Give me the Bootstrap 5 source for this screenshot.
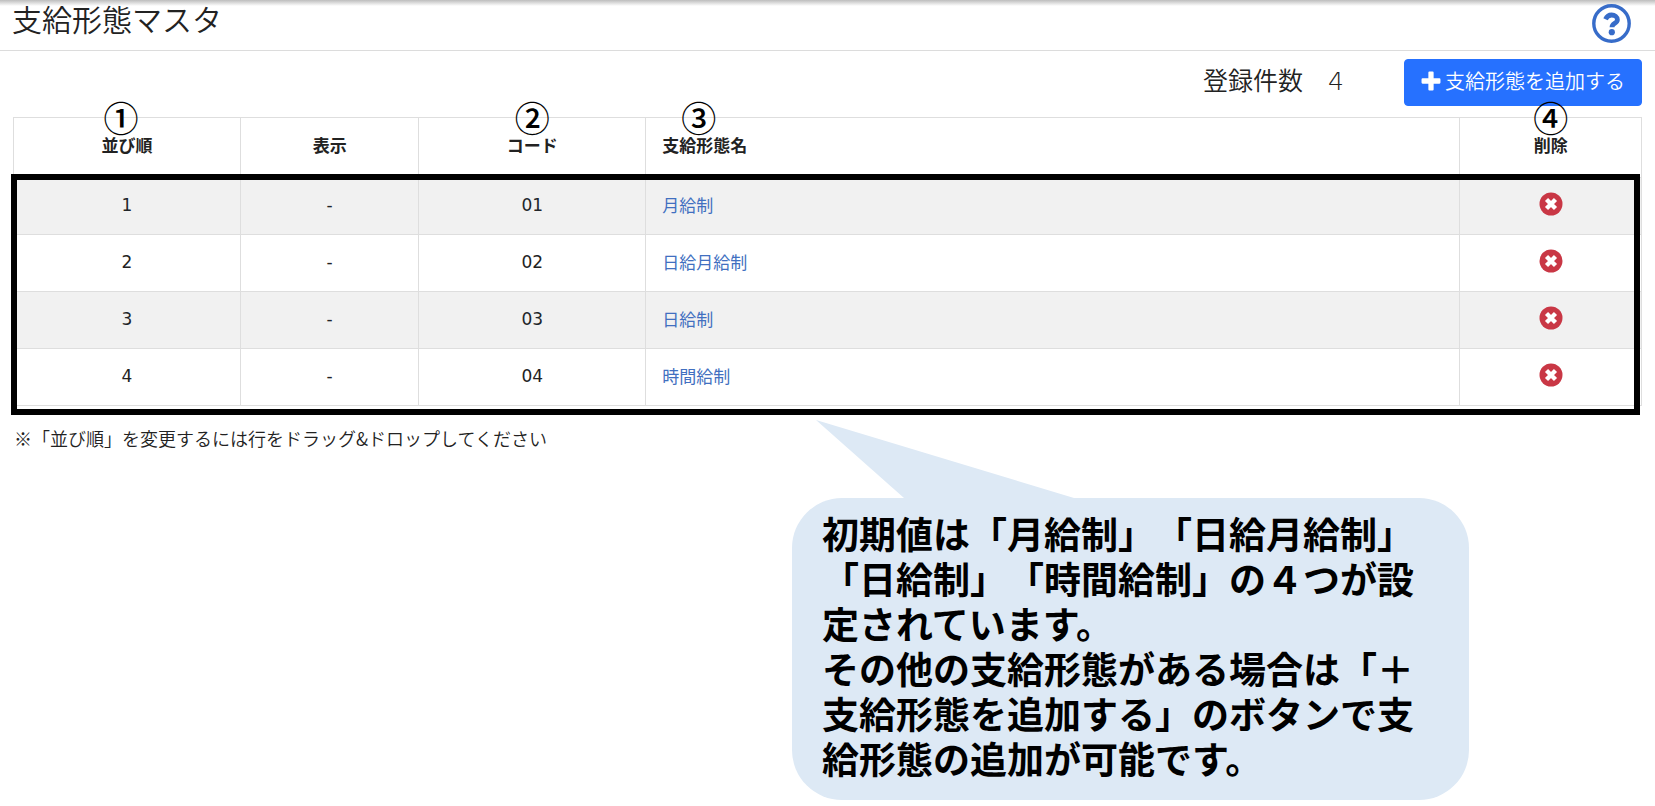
<!DOCTYPE html>
<html lang="ja">
<head>
<meta charset="utf-8">
<meta name="viewport" content="width=device-width, initial-scale=1">
<title>支給形態マスタ</title>
<link href="https://cdn.jsdelivr.net/npm/bootstrap@5.3.0/dist/css/bootstrap.min.css" rel="stylesheet">
<style>
  body { font-family: "Noto Sans CJK JP", sans-serif; color: #222; background: #fff; text-spacing-trim: space-all; }
  .page-head { height: 51px; border-bottom: 1px solid #dcdcdc; background: linear-gradient(#bdbdbd, #fff 6px); padding: 0 24px 0 12px; }
  .page-head h1 { font-size: 30px; line-height: 36px; font-weight: 350; }
  .help-link { color: #376cc9; line-height: 0; margin-top: 4px; }
  .toolbar { padding: 8px 13px 0; margin-bottom: 11px; }
  .count { font-size: 25px; line-height: 40px; font-weight: 350; margin-right: 60px; }
  .num { font-family: "DejaVu Sans", sans-serif; }
  .btn-add { --bs-btn-bg: #2671ff; --bs-btn-border-color: #2671ff; --bs-btn-color: #fff; --bs-btn-border-radius: 4px; --bs-btn-padding-x: 16px; --bs-btn-padding-y: 0px; --bs-btn-font-size: 20px; height: 47px; font-weight: 350; }
  .list-area { margin: 0 13px; }
  .pay-table { table-layout: fixed; font-size: 17px; line-height: 26px; --bs-table-striped-bg: #f1f1f1; color: #222; border-color: #dedede; }
  .pay-table th { height: 60px; padding: 0 16px 6px; vertical-align: middle; }
  .pay-table td { height: 57px; padding: 0 16px 3px; }
  .pay-table a { color: #416fc0; }
  .pay-table .btn { line-height: 0; color: #c93745; vertical-align: top; }
  .marker { position: absolute; top: -30px; left: 50%; transform: translateX(-50%); font-size: 35px; line-height: 30px; font-weight: 500; color: #000; }
  .marker-start { margin-left: -6px; }
  .frame { position: absolute; top: 57px; right: 2px; bottom: -9px; left: -2px; border: 6px solid #000; pointer-events: none; }
  .hint { font-size: 18px; line-height: 26px; margin: 19px 14px 0; font-weight: 350; }
  .callout { position: relative; margin: 47px 0 7px 47.85%; width: 40.9%; min-width: 652px; padding: 13px 30px 19px; border-radius: 50px; background: #dde9f5; color: #000; font-size: 37px; line-height: 45px; font-weight: 700; }
  .callout p { white-space: nowrap; }
  .tail { position: absolute; left: 24px; bottom: 100%; display: block; }
</style>
</head>
<body>
<header class="page-head d-flex justify-content-between align-items-start">
  <h1 class="m-0">支給形態マスタ</h1>
  <a class="help-link" href="#" aria-label="ヘルプ">
    <svg width="39" height="39" viewBox="0 0 39 39" fill="none" stroke="currentColor">
      <circle cx="19.5" cy="19.5" r="17.7" stroke-width="3.4"/>
      <path d="M13.500 15.200C14.800 12.400 16.800 11 19.600 11C22.800 11 25.400 12.900 25.400 15.700C25.400 19.300 20 19.300 20 23.200" stroke-width="4.800"/>
      <circle cx="19.8" cy="28.2" r="3.1" fill="currentColor" stroke="none"/>
    </svg>
  </a>
</header>
<main>
  <div class="toolbar d-flex justify-content-end align-items-start">
    <div class="count">登録件数　<span class="num">4</span></div>
    <button type="button" class="btn btn-add d-flex align-items-center gap-1 pb-1">
      <svg width="20" height="20" viewBox="0 0 19 19" fill="currentColor" aria-hidden="true"><path d="M8 0.500h3a1 1 0 0 1 1 1V7h5.500a1 1 0 0 1 1 1v3a1 1 0 0 1-1 1H12v5.500a1 1 0 0 1-1 1H8a1 1 0 0 1-1-1V12H1.500a1 1 0 0 1-1-1V8a1 1 0 0 1 1-1H7V1.500a1 1 0 0 1 1-1z"/></svg>
      支給形態を追加する
    </button>
  </div>
  <svg class="d-none" aria-hidden="true">
    <symbol id="del" viewBox="0 0 24 24"><circle cx="12" cy="12" r="11.500" fill="currentColor"/><path d="M7.500 7.500l9 9M16.500 7.500l-9 9" stroke="#fff" stroke-width="4.400"/></symbol>
  </svg>
  <div class="list-area position-relative">
    <table class="table table-bordered table-striped pay-table align-middle text-center m-0">
      <colgroup><col style="width:13.94%"><col style="width:10.96%"><col style="width:13.94%"><col style="width:50%"><col style="width:11.16%"></colgroup>
      <thead>
        <tr>
          <th scope="col"><div class="position-relative">並び順<span class="marker marker-start">①</span></div></th>
          <th scope="col">表示</th>
          <th scope="col"><div class="position-relative">コード<span class="marker">②</span></div></th>
          <th scope="col" class="text-start"><div class="position-relative d-inline-block align-top">支給形態名<span class="marker marker-start">③</span></div></th>
          <th scope="col"><div class="position-relative">削除<span class="marker">④</span></div></th>
        </tr>
      </thead>
      <tbody>
        <tr><td class="num">1</td><td class="num">-</td><td class="num">01</td><td class="text-start"><a class="text-decoration-none" href="#">月給制</a></td><td><button type="button" class="btn p-0 border-0" aria-label="削除"><svg width="24" height="24"><use href="#del"/></svg></button></td></tr>
        <tr><td class="num">2</td><td class="num">-</td><td class="num">02</td><td class="text-start"><a class="text-decoration-none" href="#">日給月給制</a></td><td><button type="button" class="btn p-0 border-0" aria-label="削除"><svg width="24" height="24"><use href="#del"/></svg></button></td></tr>
        <tr><td class="num">3</td><td class="num">-</td><td class="num">03</td><td class="text-start"><a class="text-decoration-none" href="#">日給制</a></td><td><button type="button" class="btn p-0 border-0" aria-label="削除"><svg width="24" height="24"><use href="#del"/></svg></button></td></tr>
        <tr><td class="num">4</td><td class="num">-</td><td class="num">04</td><td class="text-start"><a class="text-decoration-none" href="#">時間給制</a></td><td><button type="button" class="btn p-0 border-0" aria-label="削除"><svg width="24" height="24"><use href="#del"/></svg></button></td></tr>
      </tbody>
    </table>
    <div class="frame"></div>
  </div>
  <p class="hint">※「並び順」を変更するには行をドラッグ&amp;ドロップしてください</p>
  <aside class="callout">
    <svg class="tail" width="260" height="78" viewBox="0 0 260 78" aria-hidden="true"><path d="M0 0L258 78H88z" fill="#dde9f5"/></svg>
    <p class="m-0">初期値は「月給制」「日給月給制」<br>「日給制」「時間給制」の４つが設<br>定されています。<br>その他の支給形態がある場合は「＋<br>支給形態を追加する」のボタンで支<br>給形態の追加が可能です。</p>
  </aside>
</main>
<script src="https://cdn.jsdelivr.net/npm/bootstrap@5.3.0/dist/js/bootstrap.bundle.min.js"></script>
</body>
</html>
